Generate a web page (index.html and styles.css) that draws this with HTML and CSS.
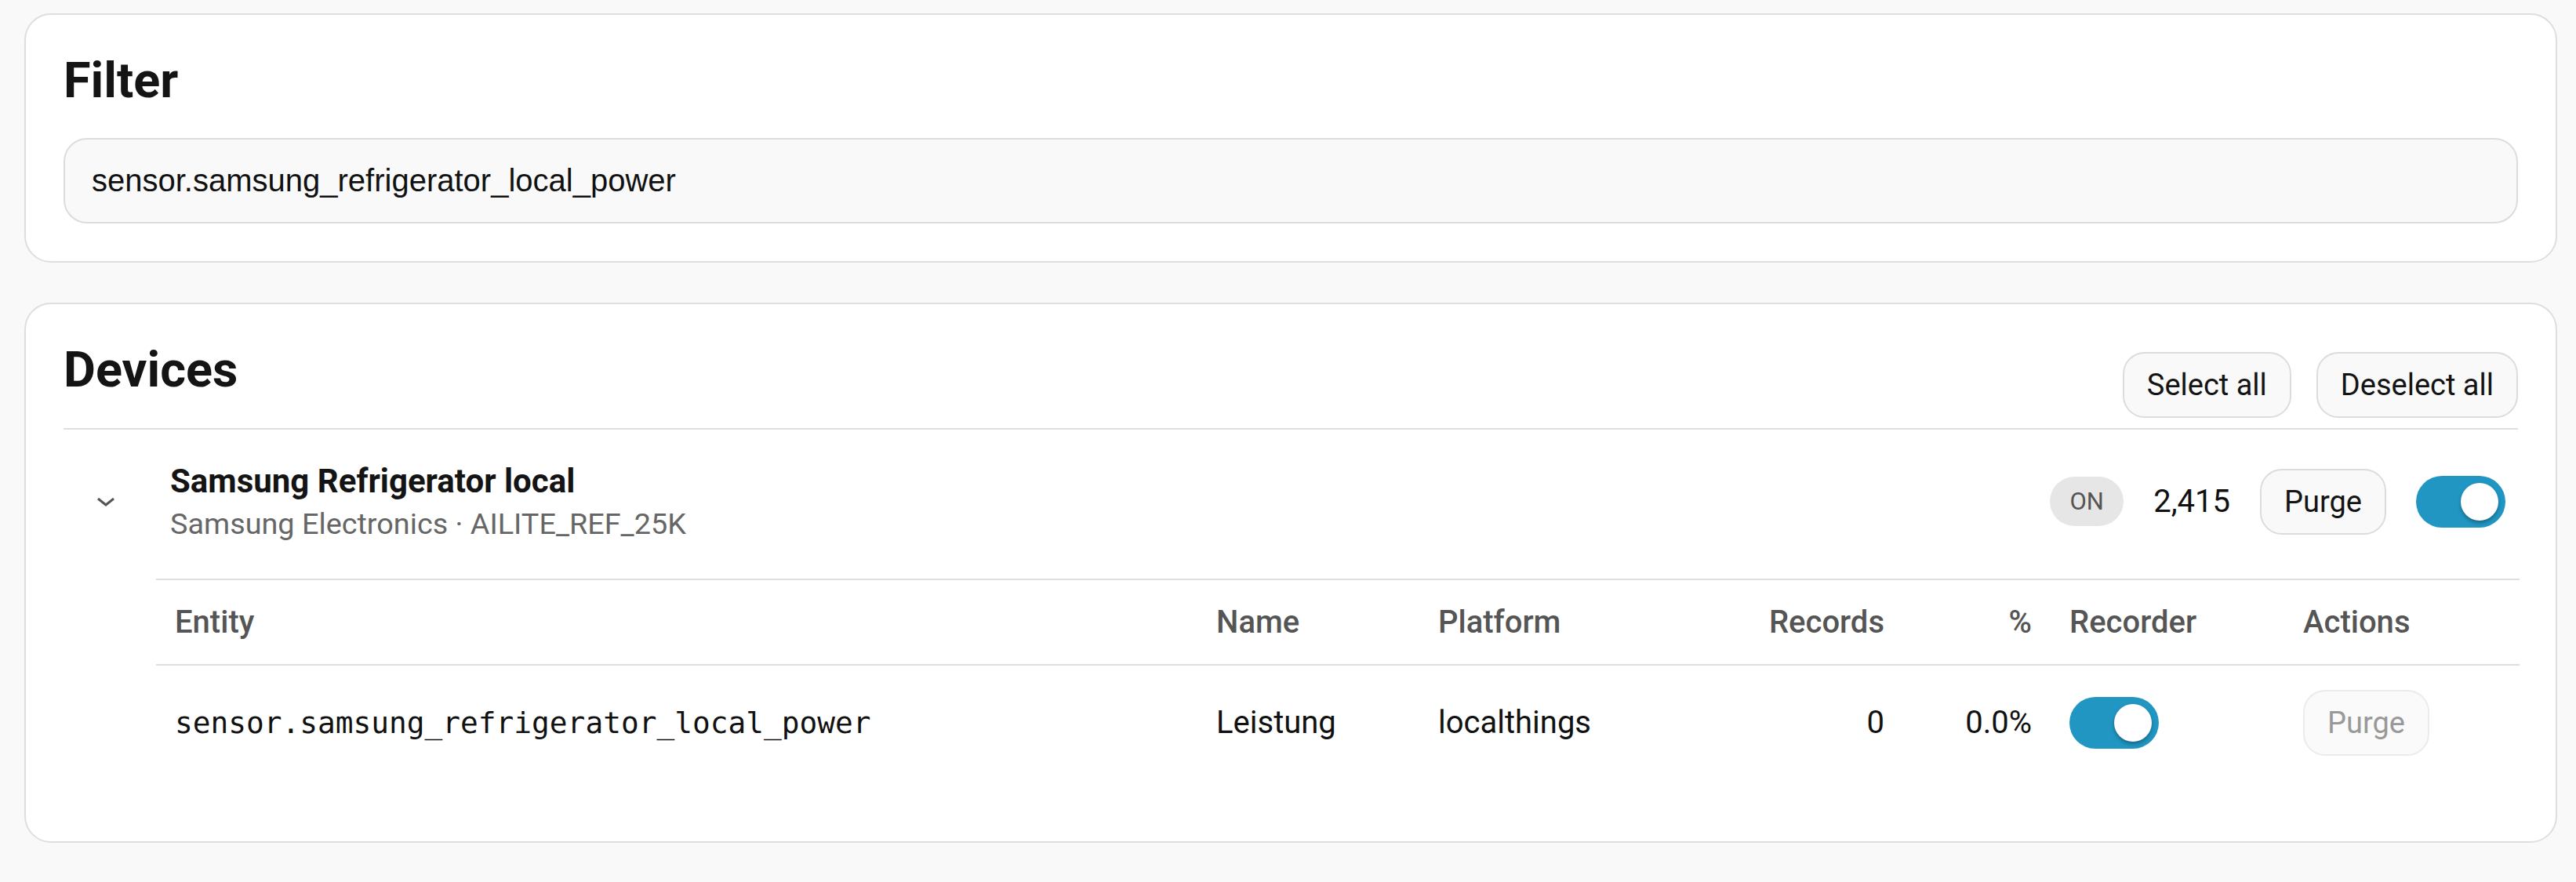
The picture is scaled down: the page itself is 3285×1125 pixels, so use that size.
FILE: index.html
```html
<!DOCTYPE html>
<html lang="en">
<head>
    <meta charset="UTF-8">
    <meta name="viewport" content="width=device-width, initial-scale=1.0">
    <title>Recorder Purge</title>
    <link rel="stylesheet" href="styles.css">
</head>
<body>
    <main class="page">
        <!-- Filter card -->
        <section class="card">
            <h2>Filter</h2>
            <input class="filter-input" type="text" value="sensor.samsung_refrigerator_local_power">
        </section>

        <!-- Devices card -->
        <section class="card">
            <div class="card-head">
                <h2>Devices</h2>
                <div class="head-actions">
                    <button class="btn">Select all</button>
                    <button class="btn">Deselect all</button>
                </div>
            </div>

            <div class="device">
                <div class="device-row">
                    <span class="chevron">
                        <svg width="24" height="12" viewBox="0 0 24 12"><path d="M2 2 L12 10 L22 2" fill="none" stroke="#555" stroke-width="3"/></svg>
                    </span>
                    <div class="device-info">
                        <div class="device-name">Samsung Refrigerator local</div>
                        <div class="device-meta">Samsung Electronics · AILITE_REF_25K</div>
                    </div>
                    <div class="device-actions">
                        <span class="badge">ON</span>
                        <span class="count">2,415</span>
                        <button class="btn">Purge</button>
                        <span class="toggle"><span class="knob"></span></span>
                    </div>
                </div>

                <table class="entities">
                    <colgroup>
                        <col>
                        <col class="col-name">
                        <col class="col-platform">
                        <col class="col-records">
                        <col class="col-pct">
                        <col class="col-recorder">
                        <col class="col-actions">
                    </colgroup>
                    <thead>
                        <tr>
                            <th>Entity</th>
                            <th>Name</th>
                            <th>Platform</th>
                            <th class="num">Records</th>
                            <th class="num">%</th>
                            <th>Recorder</th>
                            <th>Actions</th>
                        </tr>
                    </thead>
                    <tbody>
                        <tr>
                            <td class="mono">sensor.samsung_refrigerator_local_power</td>
                            <td>Leistung</td>
                            <td>localthings</td>
                            <td class="num">0</td>
                            <td class="num">0.0%</td>
                            <td><span class="toggle"><span class="knob"></span></span></td>
                            <td><button class="btn" disabled>Purge</button></td>
                        </tr>
                    </tbody>
                </table>
            </div>
        </section>
    </main>
</body>
</html>
```

FILE: styles.css
```css
body {
    margin: 0;
    background: #f9f9f9;
    font-family: Roboto, "Noto Sans", sans-serif;
    font-size: 38px;
    color: #141414;
}
.page {
    padding: 17px 24px 0 31px;
}
.card {
    background: #fff;
    border: 2px solid #dedede;
    border-radius: 34px;
    padding: 48px;
    margin-bottom: 51px;
}
h2 {
    margin: 0;
    font-size: 63px;
    line-height: 1.15;
    font-weight: 700;
    color: #141414;
}
.card > h2 {
    margin-bottom: 37px;
}
.filter-input {
    display: block;
    box-sizing: border-box;
    width: 100%;
    height: 109px;
    padding: 0 34px;
    border: 2px solid #dcdcdc;
    border-radius: 30px;
    background: #f9f9f9;
    font-family: "Liberation Sans", Arial, sans-serif;
    font-size: 40px;
    color: #111;
    outline: none;
}
.card-head {
    display: flex;
    justify-content: space-between;
    align-items: flex-end;
    padding-bottom: 13px;
    border-bottom: 2px solid #dedede;
}
.card-head h2 {
    margin-bottom: 24px;
}
.head-actions {
    display: flex;
    gap: 32px;
}
.btn {
    box-sizing: border-box;
    height: 84px;
    padding: 0 29px;
    border: 2px solid #dcdcdc;
    border-radius: 28px;
    background: #f9f9f9;
    font-family: Roboto, "Noto Sans", sans-serif;
    font-size: 38px;
    color: #141414;
}
.btn:disabled {
    color: #999;
    background: #fafafa;
    border-color: #ebebeb;
}
.device {
    padding-bottom: 30px;
}
.device-row {
    display: flex;
    align-items: center;
    padding: 42px 16px 48px 30px;
}
.chevron {
    width: 48px;
    display: flex;
    justify-content: center;
    margin-right: 58px;
}
.device-info {
    flex: 1;
}
.device-name {
    font-weight: 700;
    font-size: 42px;
    line-height: 48px;
}
.device-meta {
    margin-top: 8px;
    font-size: 37.8px;
    line-height: 44px;
    color: #666;
}
.device-actions {
    display: flex;
    align-items: center;
    gap: 38px;
}
.badge {
    display: inline-flex;
    align-items: center;
    justify-content: center;
    width: 94px;
    height: 63px;
    border-radius: 32px;
    background: #e6e6e6;
    color: #555;
    font-size: 31px;
}
.count {
    font-size: 40px;
    color: #111;
}
.toggle {
    position: relative;
    display: inline-block;
    width: 114px;
    height: 66px;
    border-radius: 33px;
    background: #2196c3;
    vertical-align: middle;
}
.knob {
    position: absolute;
    top: 9px;
    right: 9px;
    width: 48px;
    height: 48px;
    border-radius: 50%;
    background: #fff;
    box-shadow: 0 3px 5px rgb(0 0 0 / 0.3);
}
.entities {
    width: calc(100% - 116px);
    margin-left: 118px;
    border-collapse: collapse;
    table-layout: fixed;
}
.col-name { width: 283px; }
.col-platform { width: 400px; }
.col-records { width: 217px; }
.col-pct { width: 188px; }
.col-recorder { width: 298px; }
.col-actions { width: 300px; }
.entities th {
    text-align: left;
    font-weight: 500;
    font-size: 40px;
    line-height: 47px;
    color: #555;
    padding: 30px 24px;
    border-top: 2px solid #dedede;
    border-bottom: 2px solid #dedede;
}
.entities td {
    padding: 31px 24px;
    font-size: 40px;
    line-height: 44px;
    color: #111;
    vertical-align: middle;
}
.entities .num {
    text-align: right;
}
.entities .mono {
    font-family: "DejaVu Sans Mono", monospace;
    font-size: 37.8px;
}
```
